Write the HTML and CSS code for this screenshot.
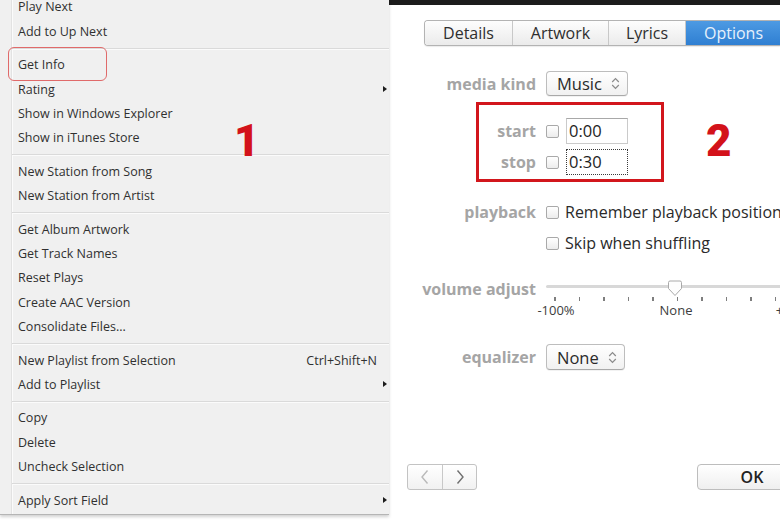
FILE: index.html
```html
<!DOCTYPE html>
<html lang="en">
<head>
<meta charset="utf-8">
<title>Get Info – Options</title>
<link rel="stylesheet" href="styles.css">
</head>
<body>
<div class="screen">

  <nav class="menu">
    <ul class="menu-list">
      <li class="item">Play Next</li>
      <li class="item">Add to Up Next</li>
      <li class="sep"></li>
      <li class="item">Get Info</li>
      <li class="item sub">Rating</li>
      <li class="item">Show in Windows Explorer</li>
      <li class="item">Show in iTunes Store</li>
      <li class="sep"></li>
      <li class="item">New Station from Song</li>
      <li class="item">New Station from Artist</li>
      <li class="sep"></li>
      <li class="item">Get Album Artwork</li>
      <li class="item">Get Track Names</li>
      <li class="item">Reset Plays</li>
      <li class="item">Create AAC Version</li>
      <li class="item">Consolidate Files...</li>
      <li class="sep"></li>
      <li class="item">New Playlist from Selection<span class="shortcut">Ctrl+Shift+N</span></li>
      <li class="item sub">Add to Playlist</li>
      <li class="sep"></li>
      <li class="item">Copy</li>
      <li class="item">Delete</li>
      <li class="item">Uncheck Selection</li>
      <li class="sep"></li>
      <li class="item sub">Apply Sort Field</li>
    </ul>
    <span class="callout callout-info"></span>
    <span class="step step-one">1</span>
  </nav>

  <section class="dialog">
    <div class="titlebar"></div>

    <div class="tabs">
      <div class="tab tab-details">Details</div>
      <div class="tab tab-artwork">Artwork</div>
      <div class="tab tab-lyrics">Lyrics</div>
      <div class="tab tab-options active">Options</div>
    </div>

    <div class="form">
      <div class="row row-kind">
        <span class="label">media kind</span>
        <div class="popup popup-kind">
          <span>Music</span>
          <svg class="updown" viewBox="0 0 9 13" width="9" height="13"><path d="M1.2 5 L4.5 1.7 L7.8 5 M1.2 8 L4.5 11.3 L7.8 8" fill="none" stroke="#8a8a8a" stroke-width="1.2"/></svg>
        </div>
      </div>

      <div class="row row-start">
        <span class="label">start</span>
        <span class="check"></span>
        <span class="field">0:00</span>
      </div>

      <div class="row row-stop">
        <span class="label">stop</span>
        <span class="check"></span>
        <span class="field focused">0:30</span>
      </div>

      <div class="row row-playback">
        <span class="label">playback</span>
        <span class="check"></span>
        <span class="option">Remember playback position</span>
      </div>

      <div class="row row-skip">
        <span class="label"></span>
        <span class="check"></span>
        <span class="option">Skip when shuffling</span>
      </div>

      <div class="row row-volume">
        <span class="label">volume adjust</span>
        <div class="slider">
          <div class="track"></div>
          <svg class="thumb" viewBox="0 0 16 17" width="16" height="17"><path d="M1.5 2.5 Q1.5 1 3 1 H13 Q14.5 1 14.5 2.5 V8.5 L8 15.5 L1.5 8.5 Z" fill="#fdfdfd" stroke="#a9a9a9" stroke-width="1"/></svg>
          <div class="ticks">
            <i></i><i></i><i></i><i></i><i></i><i></i><i></i><i></i><i></i><i></i><i></i>
          </div>
          <div class="scale">
            <span>-100%</span><span>None</span><span>+100%</span>
          </div>
        </div>
      </div>

      <div class="row row-eq">
        <span class="label">equalizer</span>
        <div class="popup popup-eq">
          <span>None</span>
          <svg class="updown" viewBox="0 0 9 13" width="9" height="13"><path d="M1.2 5 L4.5 1.7 L7.8 5 M1.2 8 L4.5 11.3 L7.8 8" fill="none" stroke="#8a8a8a" stroke-width="1.2"/></svg>
        </div>
      </div>
    </div>

    <div class="footer">
      <div class="nav">
        <span class="nav-btn"><svg viewBox="0 0 10 16" width="10" height="16"><path d="M7.5 1.5 L2 8 L7.5 14.5" fill="none" stroke="#b9b9b9" stroke-width="1.4"/></svg></span>
        <span class="nav-btn"><svg viewBox="0 0 10 16" width="10" height="16"><path d="M2.5 1.5 L8 8 L2.5 14.5" fill="none" stroke="#6f6f6f" stroke-width="1.4"/></svg></span>
      </div>
      <button class="ok">OK</button>
    </div>

    <span class="highlight"></span>
    <span class="step step-two">2</span>
  </section>

</div>
</body>
</html>
```

FILE: styles.css
```css
* {
  box-sizing: border-box;
  margin: 0;
  padding: 0;
}

html,
body {
  width: 780px;
  height: 520px;
  overflow: hidden;
  background: #ffffff;
}

body {
  font-family: "Open Sans", "Noto Sans", sans-serif;
}

.screen {
  display: flex;
  height: 520px;
}

/* ---------- context menu ---------- */

.menu {
  position: relative;
  flex: none;
  width: 389px;
  height: 515px;
  overflow: hidden;
  background: linear-gradient(to right, #f0f0f0 11px, #e2e2e2 11px 12px, #fbfbfb 12px 13px, #f0f0f0 13px);
  border-bottom: 1px solid #b5b5b5;
  box-shadow: 0 2px 3px rgba(0, 0, 0, 0.18);
  font-size: 12.5px;
  font-weight: 500;
  color: #303030;
  z-index: 1;
}

.menu-list {
  list-style: none;
  margin-top: -5.2px;
}

.item {
  display: flex;
  align-items: center;
  height: 24.3px;
  padding: 0 2px 0 18px;
  white-space: nowrap;
}

.sep {
  display: flex;
  align-items: center;
  height: 9.3px;
  padding-left: 12px;
}

.sep::before {
  content: "";
  flex: 1;
  height: 1px;
  background: #dadada;
  box-shadow: 0 1px 0 #fbfbfb;
}

.shortcut {
  margin-left: auto;
  margin-right: 10px;
}

.sub::after {
  content: "";
  margin-left: auto;
  border-left: 4px solid #1c1c1c;
  border-top: 3.5px solid transparent;
  border-bottom: 3.5px solid transparent;
}

.callout-info {
  position: absolute;
  left: 8px;
  top: 47px;
  width: 99px;
  height: 34px;
  border: 1.5px solid #e06a6a;
  border-radius: 6px;
}

.step {
  position: absolute;
  font-family: Roboto, "Liberation Sans", sans-serif;
  font-weight: 900;
  font-size: 44px;
  line-height: 44px;
  color: #d3121a;
}

.step-one {
  left: 234px;
  top: 119px;
}

/* ---------- info dialog ---------- */

.dialog {
  position: relative;
  flex: 1;
  display: flex;
  flex-direction: column;
  overflow: hidden;
  background: #ffffff;
  color: #2a2a2a;
}

.titlebar {
  flex: none;
  height: 5px;
  background: #1c1c1c;
}

.tabs {
  display: flex;
  flex: none;
  height: 26px;
  margin: 15px 0 0 35px;
  border: 1px solid #b3b3b3;
  border-right: none;
  border-radius: 4px 0 0 4px;
  overflow: hidden;
  box-shadow: 0 1px 1px rgba(0, 0, 0, 0.08);
  font-size: 16px;
}

.tab {
  display: flex;
  align-items: center;
  justify-content: center;
  flex: none;
  background: linear-gradient(#fdfdfd, #ebebeb);
  border-right: 1px solid #c8c8c8;
  color: #2e2e2e;
}

.tab-details { width: 88px; }
.tab-artwork { width: 96px; }
.tab-lyrics  { width: 77px; }

.tab-options {
  width: 95px;
  border-right: none;
}

.tab.active {
  background: linear-gradient(#4d9ae3, #2f7fd2);
  color: #e6f0fb;
}

.form {
  display: flex;
  flex-direction: column;
  font-size: 16px;
}

.row {
  display: flex;
  align-items: center;
  gap: 10px;
}

.label {
  flex: none;
  width: 147px;
  text-align: right;
  font-size: 16px;
  font-weight: 700;
  color: #a5a5a5;
}

.row-kind     { margin-top: 25px; height: 25px; }
.row-start    { margin-top: 22px; height: 26px; }
.row-stop     { margin-top: 5px;  height: 26px; }
.row-playback { margin-top: 25px; height: 24px; }
.row-skip     { margin-top: 7px;  height: 24px; }
.row-volume   { margin-top: 21px; height: 40px; align-items: flex-start; }
.row-eq       { margin-top: 28px; height: 26px; }

.row-volume .label {
  line-height: 26px;
}

.row-start .check,
.row-stop .check {
  margin-right: -3px;
}

.row-playback .check,
.row-skip .check {
  margin-right: -4px;
}

.popup {
  display: flex;
  align-items: center;
  height: 100%;
  padding: 0 7px 0 10px;
  border: 1px solid #bdbdbd;
  border-bottom-color: #a9a9a9;
  border-radius: 4px;
  background: linear-gradient(#ffffff, #f1f1f1);
  box-shadow: 0 1px 0 rgba(0, 0, 0, 0.05);
  font-size: 16.5px;
  color: #2a2a2a;
}

.popup span {
  flex: 1;
}

.popup-kind { width: 82px; }
.popup-eq   { width: 79px; }

.check {
  flex: none;
  width: 13px;
  height: 13px;
  border: 1px solid #a9a9a9;
  border-radius: 2px;
  background: linear-gradient(#ffffff, #ececec);
}

.field {
  flex: none;
  width: 62px;
  height: 26px;
  padding-left: 2px;
  line-height: 24px;
  border: 1px solid #cacaca;
  border-top-color: #a8a8a8;
  font-size: 16.5px;
  color: #1e1e1e;
}

.field.focused {
  border: 1px dotted #3a3a3a;
}

.option {
  white-space: nowrap;
  color: #2a2a2a;
}

.slider {
  position: relative;
  flex: none;
  width: 270px;
  height: 40px;
}

.track {
  margin-top: 9px;
  height: 3px;
  border-radius: 2px;
  background: #d8d8d8;
}

.thumb {
  position: absolute;
  left: 121px;
  top: 4px;
}

.ticks {
  display: flex;
  gap: 23px;
  margin: 9px 0 0 8px;
  height: 4px;
}

.ticks i {
  flex: none;
  width: 1.5px;
  height: 4px;
  background: #7e7e7e;
}

.scale {
  display: flex;
  margin: 0 0 0 -50px;
  font-size: 13px;
  line-height: 18px;
  color: #3d3d3d;
}

.scale span {
  flex: none;
  width: 120px;
  text-align: center;
}

.footer {
  display: flex;
  align-items: center;
  margin-top: auto;
  padding: 0 0 30px 18px;
}

.nav {
  display: flex;
  height: 26px;
  border: 1px solid #c3c3c3;
  border-radius: 3px;
  background: linear-gradient(#ffffff, #f1f1f1);
}

.nav-btn {
  display: flex;
  align-items: center;
  justify-content: center;
  width: 34px;
}

.nav-btn + .nav-btn {
  border-left: 1px solid #c8c8c8;
}

.ok {
  flex: none;
  width: 110px;
  height: 26px;
  margin-left: 220px;
  border: 1px solid #bdbdbd;
  border-radius: 4px;
  background: linear-gradient(#ffffff, #efefef);
  font-family: "Open Sans", "Noto Sans", sans-serif;
  font-size: 16px;
  font-weight: 600;
  color: #222222;
}

.highlight {
  position: absolute;
  left: 87px;
  top: 102px;
  width: 188px;
  height: 80px;
  border: 3px solid #d2161c;
}

.step-two {
  left: 317px;
  top: 119px;
}
```
